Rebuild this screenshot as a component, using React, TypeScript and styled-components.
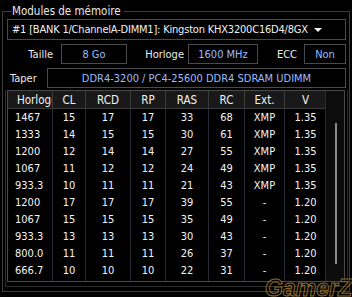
import React from "react";
import styled, { createGlobalStyle } from "styled-components";

const Global = createGlobalStyle`
  html, body { margin: 0; padding: 0; background: #000; }
  body {
    width: 352px; height: 297px; overflow: hidden;
    font-family: "DejaVu Sans Condensed", "DejaVu Sans", sans-serif;
    font-stretch: condensed;
    font-size: 11px; color: #e8e8e8;
  }
  * { box-sizing: border-box; }
`;

const Screen = styled.div`
  position: relative;
  width: 352px;
  height: 297px;
  padding: 4px 2px 0 2px;
  overflow: hidden;
`;

const Group = styled.fieldset`
  margin: 0;
  height: 288px;
  border: 1px solid #3e3e3e;
  padding: 0 3px 0 4px;
  display: flex;
  flex-direction: column;
  min-width: 0;
`;

const Legend = styled.legend`
  margin-left: 4px;
  padding: 0 3px 0 1px;
  font-size: 11.5px;
  color: #e8e8e8;
  line-height: 14px;
`;

const Select = styled.div`
  margin-top: 1px;
  height: 21px;
  border: 1px solid #4a4a4a;
  display: flex;
  align-items: center;
  padding: 0 0 0 4px;
  font-size: 11px;
  letter-spacing: -0.2px;
  color: #f0f0f0;
`;

const SelectText = styled.span`
  flex: 1;
  min-width: 0;
  overflow: hidden;
  white-space: nowrap;
`;

const Arrow = styled.span`
  width: 0;
  height: 0;
  border-left: 4px solid transparent;
  border-right: 4px solid transparent;
  border-top: 4px solid #f0f0f0;
  margin-right: 23px;
`;

const InfoRow = styled.div<{ $top: number }>`
  display: flex;
  align-items: center;
  height: 20px;
  margin-top: ${(p) => p.$top}px;
`;

const Label = styled.span<{ $w: number; $pr: number; $align?: string }>`
  width: ${(p) => p.$w}px;
  padding-right: ${(p) => p.$pr}px;
  padding-left: 3px;
  text-align: ${(p) => p.$align || "right"};
  font-size: 11px;
  color: #ececec;
  white-space: nowrap;
`;

const ValueBox = styled.div<{ $w: number }>`
  width: ${(p) => p.$w}px;
  height: 20px;
  border: 1px solid #4a4a4a;
  display: flex;
  align-items: center;
  justify-content: center;
  font-size: 11px;
  color: #9cbcff;
  white-space: nowrap;
`;

const OuterFrame = styled.div`
  margin-top: 2px;
  margin-left: -2px;
  margin-right: -2px;
  height: 197px;
  border: 1px solid #2e2e2e;
  border-top: none;
  padding: 0 2px 4px 1px;
  display: flex;
`;

const TableFrame = styled.div`
  flex: 1;
  border: 1px solid #4a4a4a;
  display: flex;
  overflow: hidden;
`;

const Grid = styled.div`
  width: 318px;
  display: flex;
  flex-direction: column;
  border-right: 1px solid #2a2a2a;
`;

const Row = styled.div<{ $head?: boolean }>`
  display: flex;
  height: ${(p) => (p.$head ? 18 : 17)}px;
  background: ${(p) => (p.$head ? "#191919" : "transparent")};
  border-bottom: ${(p) => (p.$head ? "1px solid #3a3a3a" : "none")};
  flex-shrink: 0;
`;

const Cell = styled.div<{ $w: number; $left?: boolean; $head?: boolean }>`
  width: ${(p) => p.$w}px;
  flex-shrink: 0;
  display: flex;
  align-items: center;
  justify-content: ${(p) => (p.$left ? "flex-start" : "center")};
  padding-left: ${(p) => (p.$left ? (p.$head ? 9 : 7) : 0)}px;
  border-right: 1px solid ${(p) => (p.$head ? "#3a3a3a" : "#262b33")};
  font-size: ${(p) => (p.$head ? 11.5 : 11)}px;
  color: ${(p) => (p.$head ? "#f2f2f2" : "#f4f4f4")};
  white-space: nowrap;
  overflow: hidden;
`;

const Filler = styled.div`
  flex: 1;
  display: flex;
`;

const FillCell = styled.div<{ $w: number }>`
  width: ${(p) => p.$w}px;
  flex-shrink: 0;
  border-right: 1px solid #262b33;
`;

const ScrollBar = styled.div`
  flex: 1;
  background: #0c0c0c;
  display: flex;
  justify-content: center;
  padding-top: 32px;
`;

const Thumb = styled.div`
  width: 2px;
  height: 141px;
  background: #8a8a8a;
  margin-left: 1px;
`;

const Watermark = styled.div`
  position: absolute;
  right: 0px;
  top: 277px;
  line-height: 23px;
  font-family: "Liberation Sans", Arial, sans-serif;
  font-stretch: normal;
  font-size: 23px;
  font-weight: bold;
  font-style: italic;
  color: rgba(0, 0, 0, 0.35);
  -webkit-text-stroke: 1px #8a6a2a;
`;

const cols = [
  { k: "Horloge", w: 45, left: true },
  { k: "CL", w: 33 },
  { k: "RCD", w: 45 },
  { k: "RP", w: 35 },
  { k: "RAS", w: 43 },
  { k: "RC", w: 36 },
  { k: "Ext.", w: 40 },
  { k: "V", w: 42 },
];

const rows = [
  ["1467", "15", "17", "17", "33", "68", "XMP", "1.35"],
  ["1333", "14", "15", "15", "30", "61", "XMP", "1.35"],
  ["1200", "12", "14", "14", "27", "55", "XMP", "1.35"],
  ["1067", "11", "12", "12", "24", "49", "XMP", "1.35"],
  ["933.3", "10", "11", "11", "21", "43", "XMP", "1.35"],
  ["1200", "17", "17", "17", "39", "55", "-", "1.20"],
  ["1067", "15", "15", "15", "35", "49", "-", "1.20"],
  ["933.3", "13", "13", "13", "30", "43", "-", "1.20"],
  ["800.0", "11", "11", "11", "26", "37", "-", "1.20"],
  ["666.7", "10", "10", "10", "22", "31", "-", "1.20"],
];

export default function App() {
  return (
    <Screen>
      <Global />
      <Group>
        <Legend>Modules de mémoire</Legend>
        <Select>
          <SelectText>#1 [BANK 1/ChannelA-DIMM1]: Kingston KHX3200C16D4/8GX</SelectText>
          <Arrow />
        </Select>
        <InfoRow $top={4}>
          <Label $w={54} $pr={8}>Taille</Label>
          <ValueBox $w={66}>8 Go</ValueBox>
          <Label $w={61} $pr={4}>Horloge</Label>
          <ValueBox $w={70}>1600 MHz</ValueBox>
          <Label $w={46} $pr={7}>ECC</Label>
          <ValueBox $w={42}>Non</ValueBox>
        </InfoRow>
        <InfoRow $top={4}>
          <Label $w={40} $pr={0} $align="left">Taper</Label>
          <ValueBox $w={299}>DDR4-3200 / PC4-25600 DDR4 SDRAM UDIMM</ValueBox>
        </InfoRow>
        <OuterFrame>
          <TableFrame>
            <Grid>
              <Row $head>
                {cols.map((c) => (
                  <Cell key={c.k} $w={c.w} $left={c.left} $head>
                    {c.k}
                  </Cell>
                ))}
              </Row>
              {rows.map((r, i) => (
                <Row key={i}>
                  {r.map((v, j) => (
                    <Cell key={j} $w={cols[j].w} $left={cols[j].left}>
                      {v}
                    </Cell>
                  ))}
                </Row>
              ))}
              <Filler>
                {cols.map((c) => (
                  <FillCell key={c.k} $w={c.w} />
                ))}
              </Filler>
            </Grid>
            <ScrollBar>
              <Thumb />
            </ScrollBar>
          </TableFrame>
        </OuterFrame>
      </Group>
      <Watermark>GamerZ</Watermark>
    </Screen>
  );
}
